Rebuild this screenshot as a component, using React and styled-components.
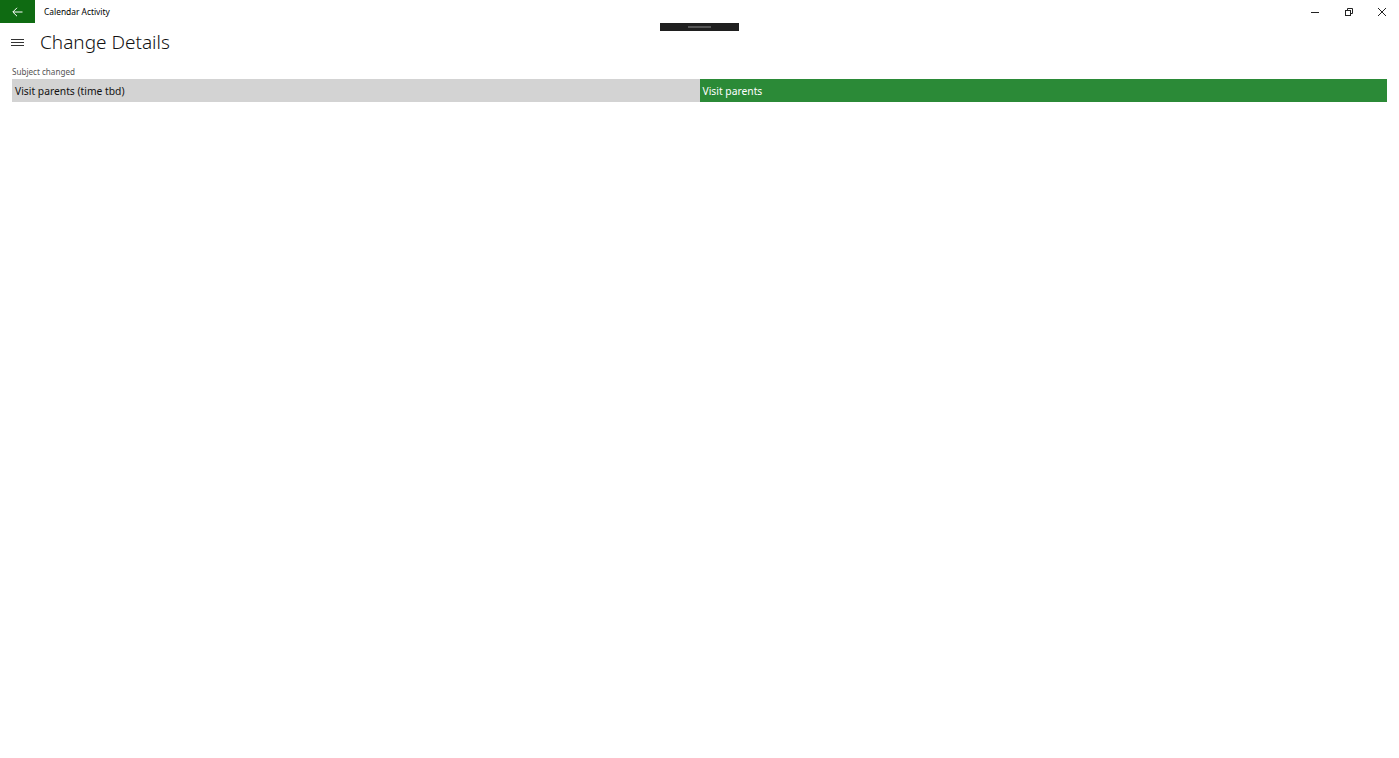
import styled, { createGlobalStyle } from "styled-components";

const GlobalStyle = createGlobalStyle`
  html, body {
    margin: 0;
    padding: 0;
    background: #ffffff;
    font-family: "Noto Sans", "Open Sans", sans-serif;
    color: #000;
  }
`;

const Window = styled.div`
  position: relative;
  width: 1399px;
  height: 758px;
  background: #fff;
  overflow: hidden;
`;

const TitleBar = styled.div`
  display: flex;
  align-items: center;
  height: 23px;
`;

const BackButton = styled.div`
  width: 35px;
  height: 23px;
  background: #0f6b12;
  display: flex;
  align-items: center;
  justify-content: center;
`;

const AppName = styled.span`
  margin-left: 9px;
  font-size: 8.4px;
  color: #000;
  flex: 1;
`;

const Controls = styled.div`
  display: flex;
  height: 23px;
`;

const ControlButton = styled.div`
  width: 33.5px;
  height: 23px;
  display: flex;
  align-items: center;
  justify-content: center;
`;

const DragHandle = styled.div`
  position: absolute;
  left: 660px;
  top: 23px;
  width: 79px;
  height: 8px;
  background: #1f1f1f;
  display: flex;
  align-items: center;
  justify-content: center;

  &::after {
    content: "";
    width: 23px;
    height: 2px;
    background: #555;
  }
`;

const Header = styled.div`
  display: flex;
  align-items: center;
  height: 37px;
  padding-left: 11px;
`;

const Hamburger = styled.div`
  width: 13px;
  display: flex;
  flex-direction: column;
  gap: 2px;
  margin-top: 1px;

  span {
    height: 1px;
    background: #333;
  }
`;

const Title = styled.h1`
  margin: 0 0 0 16px;
  font-size: 19px;
  font-weight: 300;
  color: #111;
`;

const Content = styled.div`
  padding: 5px 12px 0 12px;
`;

const Label = styled.div`
  font-size: 8.1px;
  color: #555;
  height: 14px;
  line-height: 14px;
`;

const DiffRow = styled.div`
  display: grid;
  grid-template-columns: 1fr 1fr;
  height: 23px;
`;

const DiffCell = styled.div`
  display: flex;
  align-items: center;
  padding-left: 3px;
  font-size: 10.3px;
  background: ${(p) => (p.$added ? "#2b8a37" : "#d3d3d3")};
  color: ${(p) => (p.$added ? "#fff" : "#111")};
`;

export default function App() {
  return (
    <>
      <GlobalStyle />
      <Window>
        <TitleBar>
          <BackButton>
            <svg width="11" height="10" viewBox="0 0 11 10" fill="none" stroke="#fff" strokeWidth="1">
              <path d="M10.5 5H1M5 0.8L0.8 5L5 9.2" />
            </svg>
          </BackButton>
          <AppName>Calendar Activity</AppName>
          <Controls>
            <ControlButton>
              <svg width="10" height="10" viewBox="0 0 10 10" stroke="#222" strokeWidth="1">
                <path d="M1 5.5H9" />
              </svg>
            </ControlButton>
            <ControlButton>
              <svg width="10" height="10" viewBox="0 0 10 10" fill="none" stroke="#222" strokeWidth="1">
                <rect x="1.5" y="3.5" width="5" height="5" />
                <path d="M3.5 3.5V1.5H8.5V6.5H6.5" />
              </svg>
            </ControlButton>
            <ControlButton>
              <svg width="10" height="10" viewBox="0 0 10 10" stroke="#222" strokeWidth="1">
                <path d="M1 1L9 9M9 1L1 9" />
              </svg>
            </ControlButton>
          </Controls>
        </TitleBar>
        <DragHandle />
        <Header>
          <Hamburger>
            <span />
            <span />
            <span />
          </Hamburger>
          <Title>Change Details</Title>
        </Header>
        <Content>
          <Label>Subject changed</Label>
          <DiffRow>
            <DiffCell>Visit parents (time tbd)</DiffCell>
            <DiffCell $added>Visit parents</DiffCell>
          </DiffRow>
        </Content>
      </Window>
    </>
  );
}
